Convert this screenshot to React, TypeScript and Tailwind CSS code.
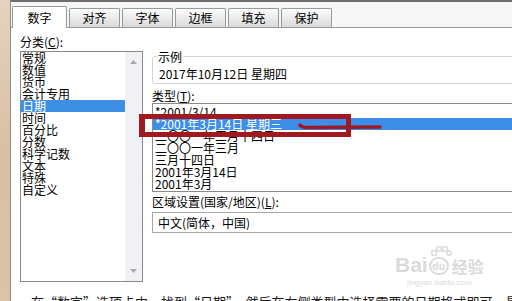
import React from 'react';

const font = { fontFamily: '"Noto Sans CJK SC", "Noto Sans", sans-serif' };

const tabs = ['数字', '对齐', '字体', '边框', '填充', '保护'];

const categories = [
  '常规',
  '数值',
  '货币',
  '会计专用',
  '日期',
  '时间',
  '百分比',
  '分数',
  '科学记数',
  '文本',
  '特殊',
  '自定义',
];

const types = [
  '*2001/3/14',
  '*2001年3月14日 星期三',
  '二〇〇一年三月十四日',
  '二〇〇一年三月',
  '三月十四日',
  '2001年3月14日',
  '2001年3月',
];

function Tab({ label, active }: { label: string; active?: boolean }) {
  if (active) {
    return (
      <div className="-mb-px flex h-[22px] w-[55px] items-center justify-center rounded-t-[2px] border border-b-0 border-[#919b9c] bg-white text-[12px] leading-none text-black">
        {label}
      </div>
    );
  }
  return (
    <div className="flex h-[19px] w-[51px] items-center justify-center rounded-t-[2px] border border-b-0 border-[#919b9c] bg-gradient-to-b from-[#fdfdfd] to-[#d9d9d9] text-[12px] leading-none text-black">
      {label}
    </div>
  );
}

function Arrow({ up }: { up?: boolean }) {
  return (
    <svg width="7" height="4" viewBox="0 0 7 4">
      <path d={up ? 'M0 4 L3.5 0 L7 4 Z' : 'M0 0 L3.5 4 L7 0 Z'} fill="#a8a8b0" />
    </svg>
  );
}

export default function App() {
  return (
    <div className="relative flex h-[301px] w-[512px] overflow-hidden bg-white text-black" style={font}>
      <div className="w-[10px] shrink-0 bg-gradient-to-b from-[#e6d2be] via-[#d9bfa5] to-[#dcc2a8]" />
      <div className="flex flex-1 flex-col border-l border-t-2 border-l-[#8c8c8c] border-t-[#6e6e6e]">
        {/* tab strip */}
        <div className="flex h-[26px] shrink-0 items-end gap-[2px] border-b border-[#919b9c] bg-[#f6f6f6] pl-[1px]">
          {tabs.map((t, i) => (
            <Tab key={t} label={t} active={i === 0} />
          ))}
        </div>

        <div className="flex flex-col bg-white">
          <div className="flex gap-[9px] pl-[9px]">
            {/* category column */}
            <div className="flex w-[123px] shrink-0 flex-col pt-[7px]">
              <div className="h-[13px] text-[12px] leading-[13px]">
                分类(<span className="underline">C</span>):
              </div>
              <div className="mt-[3px] flex h-[231px] border border-[#8a8a8a]">
                <div className="flex-1 overflow-hidden">
                  {categories.map((c, i) => (
                    <div
                      key={c}
                      className={
                        i === 4
                          ? 'h-[12px] bg-[#3d8fe6] pl-[1px] text-[12px] leading-[12px] text-white'
                          : 'h-[12px] pl-[1px] text-[12px] leading-[12px]'
                      }
                    >
                      {c}
                    </div>
                  ))}
                </div>
                <div className="flex w-[17px] flex-col items-center justify-between bg-[#f1f1f5] py-[8px]">
                  <Arrow up />
                  <Arrow />
                </div>
              </div>
            </div>

            {/* right column */}
            <div className="flex w-[380px] shrink-0 flex-col pt-[22px]">
              <fieldset className="rounded-[3px] border border-[#d4d4d4] pb-[1px]">
                <legend className="ml-[4px] px-[1px] text-[12px] leading-[13px]">示例</legend>
                <div className="pl-[6px] pt-[3px] text-[12px] leading-[16px]">2017年10月12日 星期四</div>
              </fieldset>

              <div className="mt-[5px] h-[13px] text-[12px] leading-[13px]">
                类型(<span className="underline">T</span>):
              </div>
              <div className="mt-[1px] h-[89px] overflow-hidden border border-[#8a8a8a] pt-[2px]">
                {types.map((t, i) => (
                  <div
                    key={t}
                    className={
                      i === 1
                        ? 'h-[12px] bg-[#3d8ee8] pl-[2px] text-[12px] leading-[12px] text-white'
                        : 'h-[12px] pl-[2px] text-[12px] leading-[12px]'
                    }
                  >
                    {t}
                  </div>
                ))}
              </div>

              <div className="mt-[3px] h-[13px] text-[12px] leading-[13px]">
                区域设置(国家/地区)(<span className="underline">L</span>):
              </div>
              <div className="mt-[4px] h-[21px] border border-[#a8a8a8] pl-[5px] text-[12px] leading-[19px]">
                中文(简体，中国)
              </div>
            </div>
          </div>

          <div className="mt-[12px] whitespace-nowrap pl-[20px] text-[13px] leading-[16px] text-[#1a1a1a]">
            在“数字”选项卡中，找到“日期”，然后在右侧类型中选择需要的日期格式即可，最后点击确定
          </div>
        </div>
      </div>

      {/* red annotation */}
      <div className="absolute left-[139px] top-[114px] h-[23px] w-[212px] border-[5px] border-l-[6px] border-[#9e1a20]" />
      <svg className="absolute left-[296px] top-[120px]" width="90" height="14" viewBox="0 0 90 14">
        <path d="M4 5 Q6 8 14 7.5 L84 7" stroke="#9e1a20" strokeWidth="3.5" fill="none" strokeLinecap="round" />
      </svg>

      {/* watermark */}
      <svg className="absolute left-[430px] top-[246px]" width="22" height="10" viewBox="0 0 22 10">
        <g fill="none" stroke="#dadada" strokeWidth="1.5">
          <ellipse cx="4" cy="7" rx="2.5" ry="2.5" />
          <ellipse cx="9" cy="3" rx="2.5" ry="2.5" />
          <ellipse cx="15" cy="3" rx="2.5" ry="2.5" />
          <ellipse cx="19" cy="7" rx="2.2" ry="2.2" />
        </g>
      </svg>
      <div className="absolute left-[395px] top-[254px] flex flex-col items-center text-[#dadada]">
        <div className="flex items-end">
          <span className="text-[21px] font-bold leading-[22px]" style={{ fontFamily: '"Liberation Sans", sans-serif' }}>
            Bai
          </span>
          <span className="mb-[1px] ml-[1px] flex h-[18px] w-[20px] items-center justify-center rounded-full border-2 border-[#dadada] text-[10px] font-bold leading-none">
            du
          </span>
          <span className="ml-[3px] text-[16px] font-bold leading-[20px]">经验</span>
        </div>
        <span className="mt-[2px] text-[8px] leading-[9px]" style={{ fontFamily: '"Liberation Sans", sans-serif' }}>
          jingyan.baidu.com
        </span>
      </div>
    </div>
  );
}
